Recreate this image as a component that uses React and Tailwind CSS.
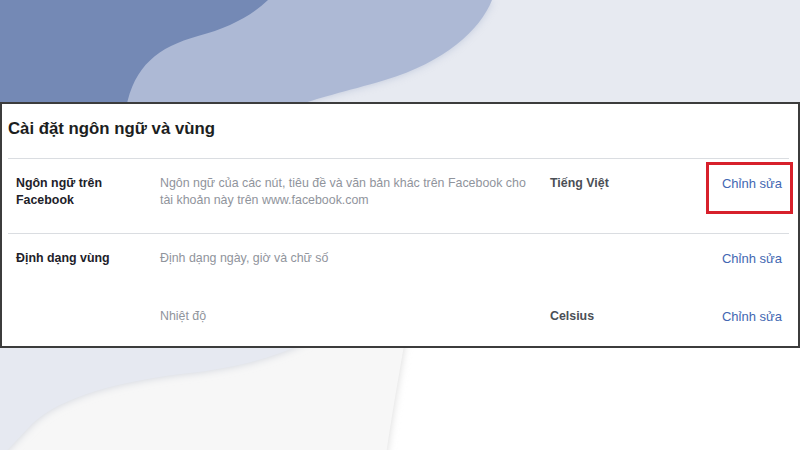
import React from 'react';

const rows = [
  {
    label: ['Ngôn ngữ trên', 'Facebook'],
    desc: ['Ngôn ngữ của các nút, tiêu đề và văn bản khác trên Facebook cho', 'tài khoản này trên www.facebook.com'],
    value: 'Tiếng Việt',
    highlight: true,
  },
  {
    label: ['Định dạng vùng'],
    desc: ['Định dạng ngày, giờ và chữ số'],
    value: '',
  },
  {
    label: [],
    desc: ['Nhiệt độ'],
    value: 'Celsius',
  },
];

const rowClass = [
  'grid grid-cols-[144px_390px_1fr_auto] pl-2 pr-[7px] mr-[3px] pt-[16px] pb-[24px] border-b border-[#dadde1] text-[12.4px] leading-[17px]',
  'grid grid-cols-[144px_390px_1fr_auto] pl-2 pr-[7px] mr-[3px] pt-[16px] text-[12.4px] leading-[17px]',
  'grid grid-cols-[144px_390px_1fr_auto] pl-2 pr-[7px] mr-[3px] pt-[40px] text-[12.4px] leading-[17px]',
];

function Backdrop() {
  return (
    <svg className="absolute inset-0" width="800" height="450" viewBox="0 0 800 450" aria-hidden="true">
      <defs>
        <filter id="soft" x="-20%" y="-20%" width="140%" height="140%">
          <feGaussianBlur stdDeviation="4" />
        </filter>
      </defs>
      <rect x="0" y="0" width="800" height="110" fill="#e7eaf1" />
      <path d="M492,0 C480,30 445,62 385,80 C345,92 318,97 292,108 L0,108 L0,0 Z" fill="#9aa7c6" opacity="0.5" filter="url(#soft)" />
      <path d="M492,0 C480,30 445,62 385,80 C345,92 318,97 292,108 L0,108 L0,0 Z" fill="#adb9d5" />
      <path d="M268,0 C250,17 228,28 198,36 C158,47 134,66 126,108 L0,108 L0,0 Z" fill="#7489b5" />

      <rect x="0" y="340" width="800" height="110" fill="#ffffff" />
      <path d="M405,340 C398,380 391,420 386,455 L0,455 L0,340 Z" fill="#d9d9d9" filter="url(#soft)" />
      <path d="M405,340 C398,380 391,420 386,455 L0,455 L0,340 Z" fill="#f7f7f7" />
      <path d="M0,340 L310,340 C282,355 242,367 190,373 C120,381 62,396 32,424 L0,458 Z" fill="#cfd3dc" filter="url(#soft)" />
      <path d="M0,340 L310,340 C282,355 242,367 190,373 C120,381 62,396 32,424 L0,458 Z" fill="#e6e9f1" />
    </svg>
  );
}

export default function App() {
  return (
    <div
      className="relative w-[800px] h-[450px] overflow-hidden bg-white"
      style={{ fontFamily: '"Liberation Sans", Arial, sans-serif' }}
    >
      <Backdrop />
      <div className="relative pt-[102px]">
        <div className="h-[246px] bg-white border-2 border-[#3c3c3c] px-[6px]">
          <div className="pt-[15px] pb-[19px] border-b border-[#dadde1] mr-[3px]">
            <h1 className="text-[16.8px] leading-[20px] font-bold text-[#1c1e21]">Cài đặt ngôn ngữ và vùng</h1>
          </div>

          {rows.map((row, i) => (
            <div key={i} className={rowClass[i]}>
              <div className="font-bold text-[#1d2129]">
                {row.label.map((l) => (
                  <div key={l}>{l}</div>
                ))}
              </div>
              <div className="text-[#90949c]">
                {row.desc.map((d) => (
                  <div key={d}>{d}</div>
                ))}
              </div>
              <div className="font-bold text-[#4b4f56]">{row.value}</div>
              <div className="relative">
                <span className="text-[13px] text-[#4267b2]">Chỉnh sửa</span>
                {row.highlight && (
                  <span className="absolute -left-[16px] -right-[11px] -top-[13px] h-[52px] border-[3px] border-[#d7202b]" />
                )}
              </div>
            </div>
          ))}
        </div>
      </div>
    </div>
  );
}
